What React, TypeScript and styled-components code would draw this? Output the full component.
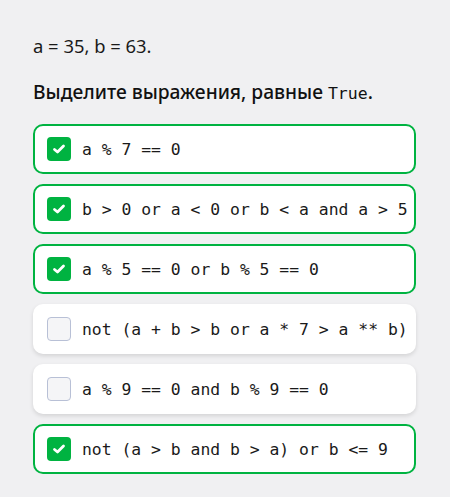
import React from "react";
import styled, { createGlobalStyle } from "styled-components";

const Global = createGlobalStyle`
  html, body { margin: 0; padding: 0; background: #f0f0f2; }
  body { font-family: "Noto Sans", "Open Sans", sans-serif; color: #000; }
`;

const Page = styled.div`
  padding: 28px 34px 20px 33px;
  display: flex;
  flex-direction: column;
`;

const Given = styled.div`
  font-size: 18.4px;
  line-height: 36px;
  color: #1a1a1a;
  letter-spacing: 0;
`;

const Question = styled.div`
  margin-top: 10px;
  font-size: 19.2px;
  font-weight: 500;
  line-height: 36px;
  color: #111;
  letter-spacing: 0;
`;

const Code = styled.span`
  font-family: "DejaVu Sans Mono", monospace;
  font-size: 16.5px;
  font-weight: 400;
  letter-spacing: 0;
`;

const List = styled.div`
  margin-top: 12px;
  display: flex;
  flex-direction: column;
  gap: 10px;
  width: 383px;
`;

const Option = styled.label<{ $checked: boolean }>`
  box-sizing: border-box;
  height: 50px;
  display: flex;
  align-items: center;
  gap: 11px;
  padding: 0 12px;
  background: #fff;
  border-radius: 10px;
  border: 2px solid ${(p) => (p.$checked ? "#00b341" : "transparent")};
  box-shadow: ${(p) => (p.$checked ? "none" : "0 2px 4px rgba(0,0,0,0.12)")};
`;

const Box = styled.span<{ $checked: boolean }>`
  box-sizing: border-box;
  width: 24px;
  height: 24px;
  flex: none;
  border-radius: 4px;
  display: flex;
  align-items: center;
  justify-content: center;
  background: ${(p) => (p.$checked ? "#00b341" : "#f5f5f7")};
  border: ${(p) => (p.$checked ? "none" : "1px solid #b8c0d6")};
`;

const Expr = styled.span`
  font-family: "DejaVu Sans Mono", monospace;
  font-size: 16.4px;
  color: #1a1a1a;
  white-space: pre;
`;

const Check = () => (
  <svg width="14" height="12" viewBox="0 0 14 12">
    <path d="M2.5 6.5 L5.5 9 L11.5 3" fill="none" stroke="#fff" strokeWidth="2.8" strokeLinecap="round" strokeLinejoin="round" />
  </svg>
);

const options = [
  { text: "a % 7 == 0", checked: true },
  { text: "b > 0 or a < 0 or b < a and a > 5", checked: true },
  { text: "a % 5 == 0 or b % 5 == 0", checked: true },
  { text: "not (a + b > b or a * 7 > a ** b)", checked: false },
  { text: "a % 9 == 0 and b % 9 == 0", checked: false },
  { text: "not (a > b and b > a) or b <= 9", checked: true },
];

export default function App() {
  return (
    <>
      <Global />
      <Page>
        <Given>a = 35, b = 63.</Given>
        <Question>
          Выделите выражения, равные <Code>True</Code>.
        </Question>
        <List>
          {options.map((o, i) => (
            <Option key={i} $checked={o.checked}>
              <Box $checked={o.checked}>{o.checked && <Check />}</Box>
              <Expr>{o.text}</Expr>
            </Option>
          ))}
        </List>
      </Page>
    </>
  );
}
